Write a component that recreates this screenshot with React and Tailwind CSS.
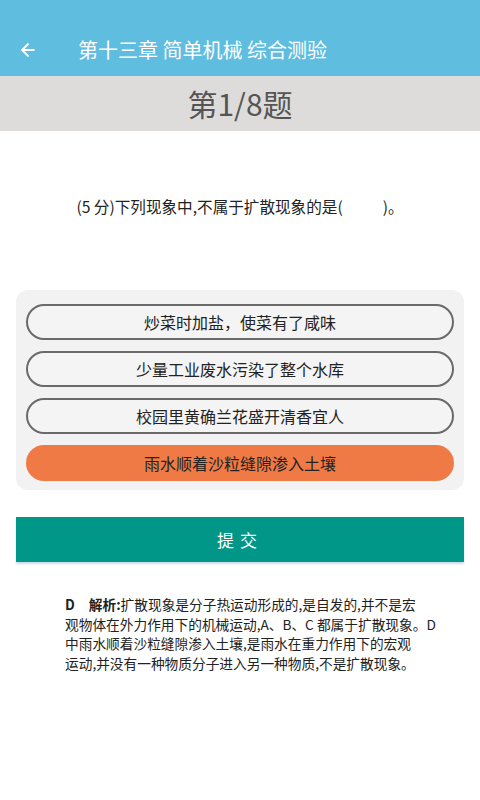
import { ArrowLeft } from "lucide-react";

const OPTIONS = [
  { text: "炒菜时加盐，使菜有了咸味", picked: false },
  { text: "少量工业废水污染了整个水库", picked: false },
  { text: "校园里黄确兰花盛开清香宜人", picked: false },
  { text: "雨水顺着沙粒缝隙渗入土壤", picked: true },
];

const sans = { fontFamily: '"Noto Sans CJK SC", "Noto Sans", sans-serif' };

export default function App() {
  return (
    <div className="flex h-[800px] w-[480px] flex-col bg-white" style={sans}>
      <header className="flex h-[76px] items-center bg-[#5fbde0] pt-[24px] text-white shadow-[0_2px_3px_rgba(0,0,0,0.18)]">
        <ArrowLeft className="ml-[18px] h-[20px] w-[20px]" strokeWidth={2.4} />
        <h1 className="ml-[40px] text-[20px] leading-none">第十三章 简单机械 综合测验</h1>
      </header>

      <div className="flex h-[55px] items-center justify-center bg-[#dedcdb] text-[30px] text-[#555]">
        第1/8题
      </div>

      <div className="mt-[62px] flex justify-center">
        <p className="text-[15.6px] leading-[26px] text-[#222]">
          (5 分)下列现象中,不属于扩散现象的是(<span className="inline-block w-[40px]" />)。
        </p>
      </div>

      <div className="mx-[16px] mt-[71px] flex flex-col gap-[11px] rounded-[12px] bg-[#f2f2f2] px-[10px] pb-[9px] pt-[14px]">
        {OPTIONS.map((o) => (
          <div
            key={o.text}
            className={
              o.picked
                ? "flex h-[36px] items-center justify-center rounded-full bg-[#f07a45] text-[16px] text-[#222]"
                : "flex h-[36px] items-center justify-center rounded-full border-2 border-[#6a6a6a] bg-[#f4f4f4] text-[16px] text-[#222]"
            }
          >
            {o.text}
          </div>
        ))}
      </div>

      <button
        type="button"
        className="mx-[16px] mt-[27px] flex h-[45px] items-center justify-center bg-[#009688] text-[17px] tracking-[6px] text-white shadow-[0_2px_2px_rgba(0,80,120,0.2)]"
      >
        提交
      </button>

      <div className="mt-[33px] pl-[65px] text-[13.7px] leading-[19.5px] text-[#222]">
        <p>
          <b>D</b>
          <span className="inline-block w-[14px]" />
          <b>解析:</b>扩散现象是分子热运动形成的,是自发的,并不是宏
        </p>
        <p>观物体在外力作用下的机械运动,A、B、C 都属于扩散现象。D</p>
        <p>中雨水顺着沙粒缝隙渗入土壤,是雨水在重力作用下的宏观</p>
        <p>运动,并没有一种物质分子进入另一种物质,不是扩散现象。</p>
      </div>
    </div>
  );
}
